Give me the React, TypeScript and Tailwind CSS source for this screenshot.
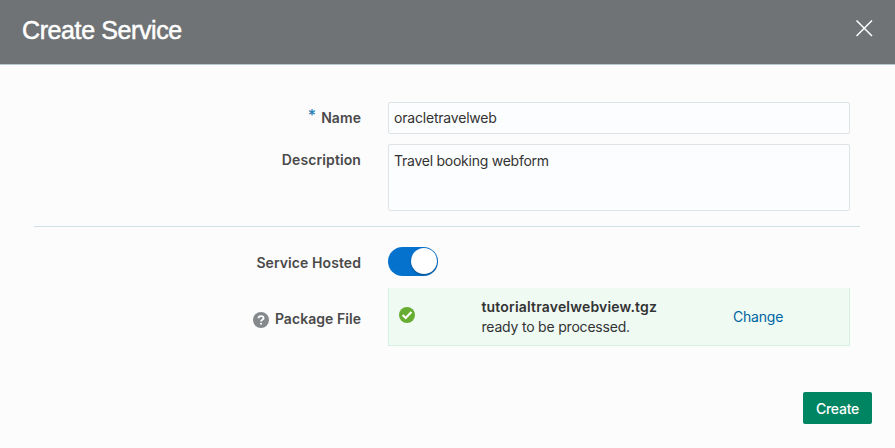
export default function App() {
  return (
    <main className="flex h-[448px] w-[895px] flex-col overflow-hidden bg-[#fcfcfc] font-['Inter','Liberation_Sans',sans-serif] text-[14px] text-[#333]">
      <header className="flex h-[65px] shrink-0 items-start justify-between border-b border-[#b5c7d0] bg-[#6f7375] pl-[22px] pr-[22px] text-white">
        <h1 className="mt-[12px] font-['Liberation_Sans',sans-serif] text-[25px] leading-9 tracking-[-0.4px] [-webkit-text-stroke:0.5px_white]">Create Service</h1>
        <button aria-label="Close" className="mt-5">
          <svg width="17" height="17" viewBox="0 0 17 17" stroke="currentColor" strokeWidth="1.5"><path d="M.5 .5 16 16M16 .5 .5 16" /></svg>
        </button>
      </header>
      <div className="mx-[34px] flex h-[162px] w-[826px] shrink-0 flex-col border-b border-[#d1dfe7] pt-[37px]">
        <div className="flex h-8 items-center">
          <label className="mr-[27px] flex w-[327px] justify-end pb-px font-semibold leading-5 tracking-[0.08px] text-[#4a4a4a]"><span className="mr-[5px] -mt-[3px] text-[16px] font-medium text-[#267db3]">*</span>Name</label>
          <div className="flex h-8 w-[462px] items-center rounded-[2px] border border-[#dfe4e7] bg-[#fcfdfe] px-[5px] pb-[2px] tracking-[-0.2px]">oracletravelweb</div>
        </div>
        <div className="mt-[10px] flex">
          <label className="mr-[27px] mt-[6px] w-[327px] text-right font-semibold leading-5 tracking-[0.1px] text-[#4a4a4a]">Description</label>
          <div className="h-[67px] w-[462px] rounded-[2px] border border-[#dfe4e7] bg-[#fcfdfe] px-[5px] pt-[6px] leading-5 tracking-[-0.25px]">Travel booking webform</div>
        </div>
      </div>
      <section className="mx-[34px] flex flex-col pt-5">
        <div className="flex h-[29px] items-center">
          <label className="mr-[27px] w-[327px] pt-px text-right font-semibold tracking-[0.08px] text-[#4a4a4a]">Service Hosted</label>
          <div className="flex h-[29px] w-[50px] items-start justify-end rounded-full bg-[#0572ce] p-px"><span className="size-[26px] rounded-full bg-white shadow-[0_1px_2px_rgba(0,0,0,0.35)]" /></div>
        </div>
        <div className="mt-3 flex h-[58px] items-center">
          <label className="mr-[27px] flex w-[327px] items-center justify-end gap-[6px] pt-[3px] font-semibold tracking-[0.05px] text-[#4a4a4a]">
            <svg className="mt-[3px]" width="16" height="16" viewBox="0 0 16 16"><circle cx="8" cy="8" r="8" fill="#85898b" /><path d="M5.5 6.2C5.5 3.4 10.6 3.4 10.6 6.2 10.6 7.8 8 7.8 8 9.5" fill="none" stroke="white" strokeWidth="1.8" /><path d="M7.1 10.9h1.9v1.7H7.1z" fill="white" /></svg>Package File
          </label>
          <div className="flex h-[58px] w-[462px] border border-t-0 border-[#d5f1e1] bg-[#effaf3]">
            <svg className="ml-[10px] mt-[19px]" width="16" height="16" viewBox="0 0 16 16"><circle cx="8" cy="8" r="8" fill="#66ad32" /><path d="m3.6 8 3.1 3 5.7-6" fill="none" stroke="white" strokeWidth="2.2" /></svg>
            <div className="ml-[66.5px] mt-[9px] w-[251.5px] leading-5 tracking-[-0.2px]"><strong className="block font-semibold tracking-[0.18px]">tutorialtravelwebview.tgz</strong>ready to be processed.</div>
            <button className="mt-[19px] h-5 leading-5 tracking-[-0.2px] text-[#0064a3]">Change</button>
          </div>
        </div>
      </section>
      <button className="mr-[23px] mt-[46px] h-8 w-[69px] shrink-0 self-end rounded-[2px] bg-[#008563] font-medium tracking-[-0.25px] text-white">Create</button>
    </main>
  );
}
